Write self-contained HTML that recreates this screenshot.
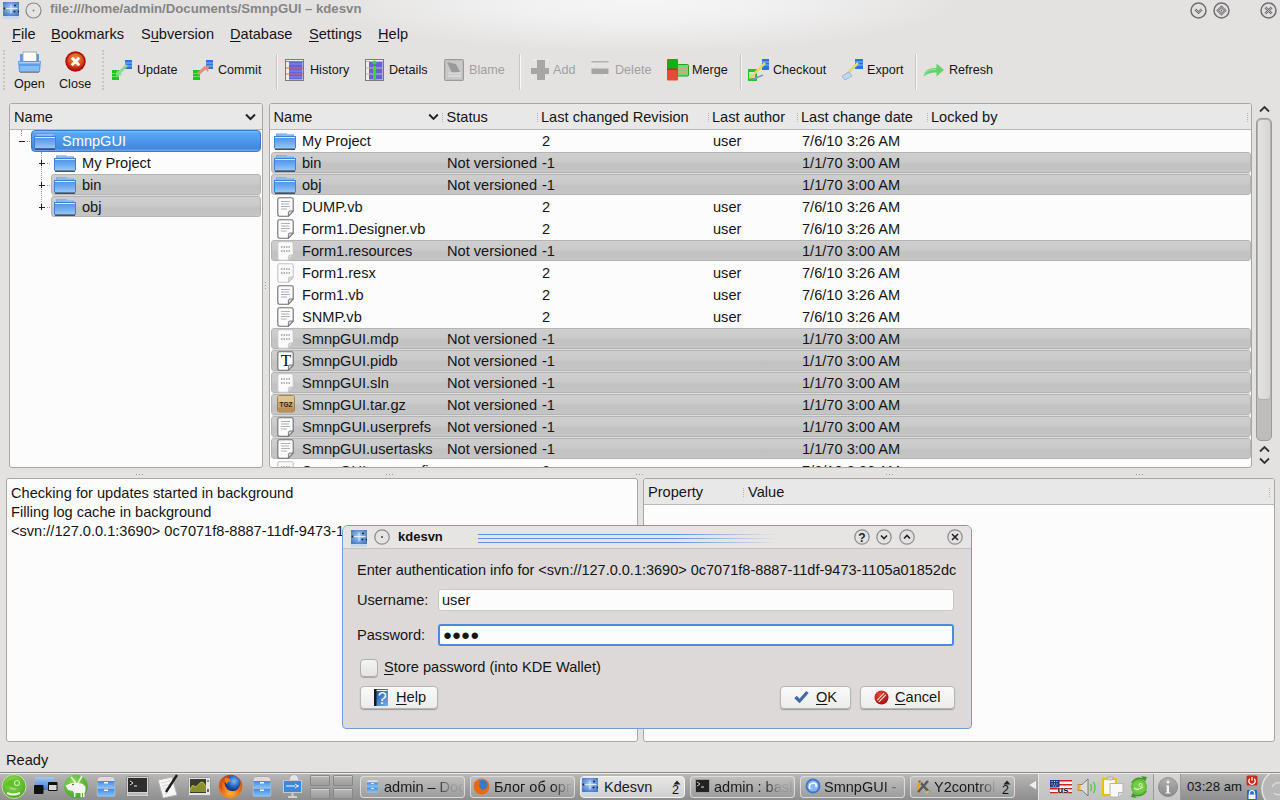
<!DOCTYPE html><html><head><meta charset="utf-8"><style>
*{box-sizing:border-box;margin:0;padding:0}
html,body{width:1280px;height:800px;overflow:hidden}
body{-webkit-font-smoothing:antialiased;background:#e4e2e1;font-family:"Liberation Sans",sans-serif;font-size:14.6px;color:#151515;position:relative}
.a{position:absolute;white-space:pre}
.u{text-decoration:underline;text-underline-offset:2px;text-decoration-thickness:1px}
.panel{position:absolute;background:#fcfcfc;border:1px solid #a9a7a6;border-radius:3px;overflow:hidden}
.hdr{position:absolute;left:0;right:0;top:0;height:26px;background:#e9e8e8;border-bottom:1px solid #b9b8b8}
.grey{position:absolute;background:linear-gradient(#cecece,#cbcbcb 40%,#c2c2c2 60%,#c5c5c5);border:1px solid #b4b4b4;border-radius:3px}
.sel{position:absolute;background:linear-gradient(#8cc0f4 0,#56a6f8 2px,#52a0f4 30%,#4a92e6 60%,#4288dc calc(100% - 2px),#6aa2e4 calc(100% - 1px),#6aa2e4 100%);border:1px solid #3a7ad2;border-radius:4px}
.tb{position:absolute;font-size:12.6px;white-space:pre;line-height:16px}
.dis{color:#a0a0a0}
.sep{position:absolute;width:2px;border-left:1px solid #c8c6c5;border-right:1px solid #f6f6f6}
.t{position:absolute;white-space:pre;line-height:18px}
</style></head><body>
<svg width="0" height="0" style="position:absolute"><defs><linearGradient id="fg" x1="0" y1="0" x2="0" y2="1"><stop offset="0" stop-color="#4e92e6"/><stop offset="0.5" stop-color="#6eaaee"/><stop offset="1" stop-color="#92c8fa"/></linearGradient></defs></svg>
<div class="a" style="left:0;top:0;width:1280px;height:100px;background:radial-gradient(320px 52px at 640px 0px,#f6f6f6 0%,#f0f0f0 45%,rgba(228,226,225,0) 100%)"></div>
<svg class="a" style="left:3px;top:2px" width="16" height="17"><defs><radialGradient id="kg" cx="0.5" cy="0.45" r="0.6"><stop offset="0" stop-color="#b0d0f4"/><stop offset="0.5" stop-color="#7aa8e0"/><stop offset="1" stop-color="#4a7cc8"/></radialGradient></defs><rect x="0" y="0" width="16" height="14" fill="url(#kg)"/><rect x="0" y="14" width="16" height="3" fill="#c8d8ea"/><path d="M1.5 6.5h13M8 2.5v9" stroke="#e8f0fa" stroke-width="0.9"/><circle cx="1.5" cy="6.5" r="1" fill="#223"/><circle cx="12" cy="3.5" r="1" fill="#223"/><circle cx="11.5" cy="9.5" r="1.1" fill="#223"/><circle cx="15.5" cy="9.5" r="0.9" fill="#223"/></svg>
<svg class="a" style="left:25px;top:2px" width="17" height="17"><circle cx="8.5" cy="8.5" r="7.5" fill="#e4e4e4" stroke="#8a8a8a" stroke-width="1.2"/><circle cx="8.5" cy="8.5" r="1" fill="#888"/></svg>
<div class="a" style="left:50px;top:0px;font-weight:bold;color:#858585;font-size:13.2px;line-height:18px">file:///home/admin/Documents/SmnpGUI – kdesvn</div>
<svg class="a" style="left:1190px;top:2px" width="17" height="17"><circle cx="8.5" cy="8.5" r="7.5" fill="#e2e0e0" stroke="#6e6e6e" stroke-width="1.5"/><path d="M5.3 7.3l3.2 3.2 3.2-3.2" stroke="#707070" stroke-width="2.4" fill="none"/><path d="M5.3 7.3l3.2 3.2 3.2-3.2" stroke="#d8d8d8" stroke-width="0.7" fill="none"/></svg>
<svg class="a" style="left:1213px;top:2px" width="17" height="17"><circle cx="8.5" cy="8.5" r="7.5" fill="#e2e0e0" stroke="#6e6e6e" stroke-width="1.5"/><path d="M8.5 4.8l3.7 3.7-3.7 3.7-3.7-3.7z" stroke="#707070" stroke-width="2.2" fill="none"/><path d="M8.5 4.8l3.7 3.7-3.7 3.7-3.7-3.7z" stroke="#d8d8d8" stroke-width="0.7" fill="none"/><circle cx="8.5" cy="8.5" r="0.9" fill="#707070"/></svg>
<svg class="a" style="left:1260px;top:2px" width="17" height="17"><circle cx="8.5" cy="8.5" r="7.5" fill="#e2e0e0" stroke="#6e6e6e" stroke-width="1.5"/><path d="M5.3 5.3l6.4 6.4M11.7 5.3l-6.4 6.4" stroke="#707070" stroke-width="2.4"/><path d="M5.3 5.3l6.4 6.4M11.7 5.3l-6.4 6.4" stroke="#d8d8d8" stroke-width="0.7"/></svg>
<div class="t" style="left:12px;top:25px"><span class="u">F</span>ile</div>
<div class="t" style="left:51px;top:25px"><span class="u">B</span>ookmarks</div>
<div class="t" style="left:141px;top:25px">S<span class="u">u</span>bversion</div>
<div class="t" style="left:230px;top:25px"><span class="u">D</span>atabase</div>
<div class="t" style="left:309px;top:25px"><span class="u">S</span>ettings</div>
<div class="t" style="left:378px;top:25px"><span class="u">H</span>elp</div>
<div class="a" style="left:3px;top:50px;width:2px;height:40px;border-left:2px dotted #c8c6c5"></div>
<div class="a" style="left:102px;top:50px;width:2px;height:40px;border-left:2px dotted #c8c6c5"></div>
<svg class="a" style="left:18px;top:51px" width="23" height="22"><rect x="2" y="3" width="19" height="8" fill="#5b9ae4"/><rect x="5" y="1" width="13.5" height="9.5" fill="#fbfbfb" stroke="#a9a9a9"/><path d="M0 10h23l-1 11h-21z" fill="#5e9ee8"/><rect x="1" y="11" width="21" height="1.5" fill="#a8cdf6"/><rect x="2" y="15" width="19" height="5" fill="#84bcf4"/><rect x="2" y="21" width="19" height="1" fill="#888"/></svg>
<div class="tb" style="left:14px;top:76px">Open</div>
<svg class="a" style="left:65px;top:51px" width="22" height="22"><defs><radialGradient id="cg" cx="0.5" cy="0.35" r="0.6"><stop offset="0" stop-color="#f09040"/><stop offset="0.7" stop-color="#d8501a"/><stop offset="1" stop-color="#b81810"/></radialGradient></defs><circle cx="10.5" cy="10.5" r="10.2" fill="#b0100c"/><circle cx="10.5" cy="10.5" r="8.6" fill="url(#cg)"/><path d="M6.8 6.8l7.4 7.4M14.2 6.8l-7.4 7.4" stroke="#fff" stroke-width="2.8"/></svg>
<div class="tb" style="left:59px;top:76px">Close</div>
<svg class="a" style="left:112px;top:59px" width="22" height="22"><rect x="0" y="11" width="7" height="10" fill="#22c322"/><path d="M0 14.5h7M0 17.5h7" stroke="#66e066" stroke-width="1"/><rect x="13" y="1" width="7" height="9" fill="#2a72e8"/><path d="M13 4h7M13 7h7" stroke="#8ab8f8" stroke-width="1"/><path d="M15 6l-8 8" stroke="#90d890" stroke-width="3"/><path d="M4 17l1-6 5 5z" fill="#90d890"/></svg>
<div class="tb" style="left:137px;top:62px">Update</div>
<svg class="a" style="left:193px;top:59px" width="22" height="22"><rect x="0" y="11" width="7" height="10" fill="#22c322"/><path d="M0 14.5h7M0 17.5h7" stroke="#66e066" stroke-width="1"/><rect x="13" y="1" width="7" height="9" fill="#2a72e8"/><path d="M13 4h7M13 7h7" stroke="#8ab8f8" stroke-width="1"/><path d="M5 15l8-7" stroke="#e09080" stroke-width="3"/><path d="M16 7l-6 1 5 5z" fill="#e09080"/></svg>
<div class="tb" style="left:218px;top:62px">Commit</div>
<div class="sep" style="left:276px;top:54px;height:36px"></div>
<svg class="a" style="left:284px;top:59px" width="22" height="22"><rect x="1.5" y="0.5" width="18" height="21" fill="#f0ece8" stroke="#7a7a7a"/><rect x="5" y="2" width="13.5" height="18.5" fill="#6464d8"/><path d="M2 2.5h17M2 9h17M2 15h17" stroke="#f06040" stroke-width="1.2"/><path d="M5 5h13M5 12h13M5 18h13" stroke="#8a8ae8" stroke-width="1"/></svg>
<div class="tb" style="left:310px;top:62px">History</div>
<svg class="a" style="left:364px;top:59px" width="22" height="22"><rect x="1.5" y="0.5" width="18" height="21" fill="#f0ece8" stroke="#7a7a7a"/><rect x="5" y="2" width="13.5" height="18.5" fill="#6464d8"/><path d="M2 2.5h17M2 9h17M2 15h17" stroke="#c8b8a0" stroke-width="1"/><rect x="9" y="7" width="3" height="14" fill="#30e030"/><circle cx="10.5" cy="3.5" r="2" fill="#30e030"/></svg>
<div class="tb" style="left:389px;top:62px">Details</div>
<svg class="a" style="left:444px;top:59px" width="22" height="22"><rect x="0.5" y="0.5" width="19" height="21" rx="1" fill="#bdbdbd" stroke="#9a9a9a"/><rect x="2" y="2" width="16" height="18" fill="#c8c8c8"/><path d="M3 3l9 2 4 8-8 1z" fill="#9a9a9a"/><path d="M4 14h13M4 17h13" stroke="#e8e8e8" stroke-width="1"/></svg>
<div class="tb dis" style="left:469px;top:62px">Blame</div>
<div class="sep" style="left:519px;top:54px;height:36px"></div>
<svg class="a" style="left:528px;top:59px" width="22" height="22"><path d="M9 1h8v8h4v6h-4v6h-8v-6h-6v-6h6z" fill="#a6a6a6"/><path d="M5 1h3M18 1h3M3 17l3 3M18 20l3-3" stroke="#f4f4f4" stroke-width="1"/></svg>
<div class="tb dis" style="left:553px;top:62px">Add</div>
<svg class="a" style="left:590px;top:59px" width="22" height="22"><rect x="1.5" y="2" width="17" height="1.5" fill="#b0b0b0"/><rect x="1.5" y="9.5" width="17" height="5.5" fill="#a4a4a4"/><path d="M2 7l3-3M14 18l3-3" stroke="#f4f4f4" stroke-width="1"/></svg>
<div class="tb dis" style="left:615px;top:62px">Delete</div>
<svg class="a" style="left:667px;top:59px" width="22" height="22"><rect x="0" y="0" width="11" height="10" rx="1" fill="#10b010"/><rect x="0" y="10" width="11" height="11.5" rx="1" fill="#e84a3a"/><rect x="0" y="9.5" width="11" height="1.5" fill="#b83018"/><rect x="10.5" y="5.5" width="11" height="11.5" rx="1" fill="#70d870" stroke="#2a9a2a"/><path d="M11 9h10M11 13h10" stroke="#f09a88" stroke-width="1.5"/></svg>
<div class="tb" style="left:692px;top:62px">Merge</div>
<div class="sep" style="left:740px;top:54px;height:36px"></div>
<svg class="a" style="left:747px;top:59px" width="22" height="22"><rect x="1" y="10" width="9" height="12" fill="#22c322"/><rect x="2" y="13" width="6" height="6" fill="#d8e4f8"/><rect x="15" y="0" width="8" height="11" fill="#2a72e8"/><path d="M15 3h8M15 6h8" stroke="#8ab8f8" stroke-width="1"/><path d="M18 4l-13 13" stroke="#e0d870" stroke-width="2.5"/><path d="M2 20l2-6 4 4z" fill="#e0d870"/><path d="M4 21l12-5" stroke="#8890c8" stroke-width="1.5"/></svg>
<div class="tb" style="left:773px;top:62px">Checkout</div>
<svg class="a" style="left:842px;top:59px" width="22" height="22"><rect x="13" y="0" width="8" height="10" fill="#2a72e8"/><path d="M13 3h8M13 6h8" stroke="#8ab8f8" stroke-width="1"/><path d="M16 4l-12 12" stroke="#e0d870" stroke-width="2.5"/><path d="M1 18l4-5 3 3z" fill="#e0d870"/><path d="M0 17l7-4 3 4-7 4z" fill="#c0d8f8" stroke="#90a8d0" stroke-width="0.8"/></svg>
<div class="tb" style="left:867px;top:62px">Export</div>
<div class="sep" style="left:915px;top:54px;height:36px"></div>
<svg class="a" style="left:923px;top:59px" width="22" height="22"><path d="M0.5 17.5q1-9 13-8.5v-4.5l7.5 6.5-7.5 6.5v-4q-7-0.5-13 4z" fill="#64d264"/><path d="M1 16q3-6 12-5.5" stroke="#9ae89a" stroke-width="1" fill="none"/></svg>
<div class="tb" style="left:949px;top:62px">Refresh</div>
<div class="panel" style="left:9px;top:103px;width:254px;height:365px">
<div class="hdr"></div>
<div class="t" style="left:4px;top:4px">Name</div>
<svg class="a" style="left:235px;top:9px" width="11" height="8"><path d="M1 1.5l4.5 4.5 4.5-4.5" stroke="#222" stroke-width="2" fill="none"/></svg>
</div>
<div class="sel" style="left:31px;top:130px;width:230px;height:22px"></div>
<div class="grey" style="left:51px;top:174px;width:210px;height:21px"></div>
<div class="grey" style="left:51px;top:196px;width:210px;height:21px"></div>
<div class="a" style="left:52px;top:195px;width:208px;height:1px;background:#dcdcdc"></div>
<div class="a" style="left:21px;top:130px;height:6px;border-left:1px dotted #999"></div>
<div class="a" style="left:41px;top:152px;height:58px;border-left:1px dotted #999"></div>
<div class="a" style="left:19px;top:141px;width:6px;height:1px;background:#222"></div>
<div class="a" style="left:27px;top:141px;width:3px;border-top:1px dotted #999"></div>
<div class="a" style="left:39px;top:163px;width:6px;height:1px;background:#222"></div>
<div class="a" style="left:41px;top:160px;width:1px;height:6px;background:#222"></div>
<div class="a" style="left:47px;top:163px;width:3px;border-top:1px dotted #999"></div>
<div class="a" style="left:39px;top:185px;width:6px;height:1px;background:#222"></div>
<div class="a" style="left:41px;top:182px;width:1px;height:6px;background:#222"></div>
<div class="a" style="left:47px;top:185px;width:3px;border-top:1px dotted #999"></div>
<div class="a" style="left:39px;top:207px;width:6px;height:1px;background:#222"></div>
<div class="a" style="left:41px;top:204px;width:1px;height:6px;background:#222"></div>
<div class="a" style="left:47px;top:207px;width:3px;border-top:1px dotted #999"></div>
<svg class="a" style="left:34px;top:133px" width="22" height="17" viewBox="0 0 22 17"><path d="M2 3V0.5h10.5l1 1h6.5V3z" fill="#5a96e0"/><rect x="2.5" y="1.2" width="17" height="1.5" fill="#9cc4f0"/><rect x="0" y="3" width="22" height="12.5" fill="#3f80d8"/><rect x="1" y="4" width="20" height="11" fill="url(#fg)"/><rect x="1" y="4" width="20" height="1" fill="#d8e8fa"/><rect x="1" y="15.5" width="20" height="1.5" fill="#44505e"/></svg>
<div class="t" style="left:62px;top:132px;color:#fff">SmnpGUI</div>
<svg class="a" style="left:54px;top:155px" width="22" height="17" viewBox="0 0 22 17"><path d="M2 3V0.5h10.5l1 1h6.5V3z" fill="#5a96e0"/><rect x="2.5" y="1.2" width="17" height="1.5" fill="#9cc4f0"/><rect x="0" y="3" width="22" height="12.5" fill="#3f80d8"/><rect x="1" y="4" width="20" height="11" fill="url(#fg)"/><rect x="1" y="4" width="20" height="1" fill="#d8e8fa"/><rect x="1" y="15.5" width="20" height="1.5" fill="#44505e"/></svg>
<div class="t" style="left:82px;top:154px">My Project</div>
<svg class="a" style="left:54px;top:177px" width="22" height="17" viewBox="0 0 22 17"><path d="M2 3V0.5h10.5l1 1h6.5V3z" fill="#5a96e0"/><rect x="2.5" y="1.2" width="17" height="1.5" fill="#9cc4f0"/><rect x="0" y="3" width="22" height="12.5" fill="#3f80d8"/><rect x="1" y="4" width="20" height="11" fill="url(#fg)"/><rect x="1" y="4" width="20" height="1" fill="#d8e8fa"/><rect x="1" y="15.5" width="20" height="1.5" fill="#44505e"/></svg>
<div class="t" style="left:82px;top:176px">bin</div>
<svg class="a" style="left:54px;top:199px" width="22" height="17" viewBox="0 0 22 17"><path d="M2 3V0.5h10.5l1 1h6.5V3z" fill="#5a96e0"/><rect x="2.5" y="1.2" width="17" height="1.5" fill="#9cc4f0"/><rect x="0" y="3" width="22" height="12.5" fill="#3f80d8"/><rect x="1" y="4" width="20" height="11" fill="url(#fg)"/><rect x="1" y="4" width="20" height="1" fill="#d8e8fa"/><rect x="1" y="15.5" width="20" height="1.5" fill="#44505e"/></svg>
<div class="t" style="left:82px;top:198px">obj</div>
<div class="panel" style="left:269px;top:103px;width:983px;height:365px">
<div class="hdr"></div>
<div class="t" style="left:3.5px;top:4px">Name</div>
<div class="t" style="left:176.5px;top:4px">Status</div>
<div class="t" style="left:271px;top:4px">Last changed Revision</div>
<div class="t" style="left:442px;top:4px">Last author</div>
<div class="t" style="left:531px;top:4px">Last change date</div>
<div class="t" style="left:661px;top:4px">Locked by</div>
<svg class="a" style="left:158px;top:9px" width="11" height="8"><path d="M1.2 1.5l4.3 4.3 4.3-4.3" stroke="#222" stroke-width="1.9" fill="none"/></svg>
<div class="a" style="left:172px;top:9px;height:9px;border-left:1px dotted #b4b4b4"></div>
<div class="a" style="left:267px;top:9px;height:9px;border-left:1px dotted #b4b4b4"></div>
<div class="a" style="left:438px;top:9px;height:9px;border-left:1px dotted #b4b4b4"></div>
<div class="a" style="left:527px;top:9px;height:9px;border-left:1px dotted #b4b4b4"></div>
<div class="a" style="left:657px;top:9px;height:9px;border-left:1px dotted #b4b4b4"></div>
<div class="a" style="left:977px;top:9px;height:9px;border-left:1px dotted #b4b4b4"></div>
<svg class="a" style="left:4px;top:29px" width="22" height="17" viewBox="0 0 22 17"><path d="M2 3V0.5h10.5l1 1h6.5V3z" fill="#5a96e0"/><rect x="2.5" y="1.2" width="17" height="1.5" fill="#9cc4f0"/><rect x="0" y="3" width="22" height="12.5" fill="#3f80d8"/><rect x="1" y="4" width="20" height="11" fill="url(#fg)"/><rect x="1" y="4" width="20" height="1" fill="#d8e8fa"/><rect x="1" y="15.5" width="20" height="1.5" fill="#44505e"/></svg>
<div class="t" style="left:32px;top:28px">My Project</div>
<div class="t" style="left:272px;top:28px">2</div>
<div class="t" style="left:443px;top:28px">user</div>
<div class="t" style="left:532px;top:28px">7/6/10 3:26 AM</div>
<div class="grey" style="left:1px;top:48px;width:980px;height:21px"></div>
<div class="a" style="left:2px;top:69px;width:978px;height:1px;background:#dcdcdc"></div>
<svg class="a" style="left:4px;top:51px" width="22" height="17" viewBox="0 0 22 17"><path d="M2 3V0.5h10.5l1 1h6.5V3z" fill="#5a96e0"/><rect x="2.5" y="1.2" width="17" height="1.5" fill="#9cc4f0"/><rect x="0" y="3" width="22" height="12.5" fill="#3f80d8"/><rect x="1" y="4" width="20" height="11" fill="url(#fg)"/><rect x="1" y="4" width="20" height="1" fill="#d8e8fa"/><rect x="1" y="15.5" width="20" height="1.5" fill="#44505e"/></svg>
<div class="t" style="left:32px;top:50px">bin</div>
<div class="t" style="left:177px;top:50px">Not versioned</div>
<div class="t" style="left:272px;top:50px">-1</div>
<div class="t" style="left:532px;top:50px">1/1/70 3:00 AM</div>
<div class="grey" style="left:1px;top:70px;width:980px;height:21px"></div>
<svg class="a" style="left:4px;top:73px" width="22" height="17" viewBox="0 0 22 17"><path d="M2 3V0.5h10.5l1 1h6.5V3z" fill="#5a96e0"/><rect x="2.5" y="1.2" width="17" height="1.5" fill="#9cc4f0"/><rect x="0" y="3" width="22" height="12.5" fill="#3f80d8"/><rect x="1" y="4" width="20" height="11" fill="url(#fg)"/><rect x="1" y="4" width="20" height="1" fill="#d8e8fa"/><rect x="1" y="15.5" width="20" height="1.5" fill="#44505e"/></svg>
<div class="t" style="left:32px;top:72px">obj</div>
<div class="t" style="left:177px;top:72px">Not versioned</div>
<div class="t" style="left:272px;top:72px">-1</div>
<div class="t" style="left:532px;top:72px">1/1/70 3:00 AM</div>
<svg class="a" style="left:7px;top:93px" width="18" height="20" viewBox="0 0 18 20"><path d="M2.5 0.8h12q1.7 0 1.7 1.7v11.5l-4.8 5.2h-8.9q-1.7 0-1.7-1.7v-15q0-1.7 1.7-1.7z" fill="#fbfbfb" stroke="#6e6e6e" stroke-width="1.1"/><path d="M16.2 14l-4.8 5.2v-3.5q0-1.7 1.7-1.7z" fill="#d8d8d8" stroke="#6e6e6e" stroke-width="0.9"/><path d="M4 4.5h9M4 7h8M4 9.5h9M4 12h6" stroke="#a4a8b4" stroke-width="0.9"/></svg>
<div class="t" style="left:32px;top:94px">DUMP.vb</div>
<div class="t" style="left:272px;top:94px">2</div>
<div class="t" style="left:443px;top:94px">user</div>
<div class="t" style="left:532px;top:94px">7/6/10 3:26 AM</div>
<svg class="a" style="left:7px;top:115px" width="18" height="20" viewBox="0 0 18 20"><path d="M2.5 0.8h12q1.7 0 1.7 1.7v11.5l-4.8 5.2h-8.9q-1.7 0-1.7-1.7v-15q0-1.7 1.7-1.7z" fill="#fbfbfb" stroke="#6e6e6e" stroke-width="1.1"/><path d="M16.2 14l-4.8 5.2v-3.5q0-1.7 1.7-1.7z" fill="#d8d8d8" stroke="#6e6e6e" stroke-width="0.9"/><path d="M4 4.5h9M4 7h8M4 9.5h9M4 12h6" stroke="#a4a8b4" stroke-width="0.9"/></svg>
<div class="t" style="left:32px;top:116px">Form1.Designer.vb</div>
<div class="t" style="left:272px;top:116px">2</div>
<div class="t" style="left:443px;top:116px">user</div>
<div class="t" style="left:532px;top:116px">7/6/10 3:26 AM</div>
<div class="grey" style="left:1px;top:136px;width:980px;height:21px"></div>
<svg class="a" style="left:7px;top:137px" width="18" height="20" viewBox="0 0 18 20"><path d="M2.5 0.8h12q1.7 0 1.7 1.7v11.5l-4.8 5.2h-8.9q-1.7 0-1.7-1.7v-15q0-1.7 1.7-1.7z" fill="#fbfbfb" stroke="#c4c4c4" stroke-width="1.1"/><path d="M16.2 14l-4.8 5.2v-3.5q0-1.7 1.7-1.7z" fill="#d8d8d8" stroke="#c4c4c4" stroke-width="0.9"/><path d="M4 6h9M4 10h9" stroke="#b0b4bc" stroke-width="2" stroke-dasharray="1.5 1"/></svg>
<div class="t" style="left:32px;top:138px">Form1.resources</div>
<div class="t" style="left:177px;top:138px">Not versioned</div>
<div class="t" style="left:272px;top:138px">-1</div>
<div class="t" style="left:532px;top:138px">1/1/70 3:00 AM</div>
<svg class="a" style="left:7px;top:159px" width="18" height="20" viewBox="0 0 18 20"><path d="M2.5 0.8h12q1.7 0 1.7 1.7v11.5l-4.8 5.2h-8.9q-1.7 0-1.7-1.7v-15q0-1.7 1.7-1.7z" fill="#fbfbfb" stroke="#c4c4c4" stroke-width="1.1"/><path d="M16.2 14l-4.8 5.2v-3.5q0-1.7 1.7-1.7z" fill="#d8d8d8" stroke="#c4c4c4" stroke-width="0.9"/><path d="M4 6h9M4 10h9" stroke="#b0b4bc" stroke-width="2" stroke-dasharray="1.5 1"/></svg>
<div class="t" style="left:32px;top:160px">Form1.resx</div>
<div class="t" style="left:272px;top:160px">2</div>
<div class="t" style="left:443px;top:160px">user</div>
<div class="t" style="left:532px;top:160px">7/6/10 3:26 AM</div>
<svg class="a" style="left:7px;top:181px" width="18" height="20" viewBox="0 0 18 20"><path d="M2.5 0.8h12q1.7 0 1.7 1.7v11.5l-4.8 5.2h-8.9q-1.7 0-1.7-1.7v-15q0-1.7 1.7-1.7z" fill="#fbfbfb" stroke="#6e6e6e" stroke-width="1.1"/><path d="M16.2 14l-4.8 5.2v-3.5q0-1.7 1.7-1.7z" fill="#d8d8d8" stroke="#6e6e6e" stroke-width="0.9"/><path d="M4 4.5h9M4 7h8M4 9.5h9M4 12h6" stroke="#a4a8b4" stroke-width="0.9"/></svg>
<div class="t" style="left:32px;top:182px">Form1.vb</div>
<div class="t" style="left:272px;top:182px">2</div>
<div class="t" style="left:443px;top:182px">user</div>
<div class="t" style="left:532px;top:182px">7/6/10 3:26 AM</div>
<svg class="a" style="left:7px;top:203px" width="18" height="20" viewBox="0 0 18 20"><path d="M2.5 0.8h12q1.7 0 1.7 1.7v11.5l-4.8 5.2h-8.9q-1.7 0-1.7-1.7v-15q0-1.7 1.7-1.7z" fill="#fbfbfb" stroke="#6e6e6e" stroke-width="1.1"/><path d="M16.2 14l-4.8 5.2v-3.5q0-1.7 1.7-1.7z" fill="#d8d8d8" stroke="#6e6e6e" stroke-width="0.9"/><path d="M4 4.5h9M4 7h8M4 9.5h9M4 12h6" stroke="#a4a8b4" stroke-width="0.9"/></svg>
<div class="t" style="left:32px;top:204px">SNMP.vb</div>
<div class="t" style="left:272px;top:204px">2</div>
<div class="t" style="left:443px;top:204px">user</div>
<div class="t" style="left:532px;top:204px">7/6/10 3:26 AM</div>
<div class="grey" style="left:1px;top:224px;width:980px;height:21px"></div>
<div class="a" style="left:2px;top:245px;width:978px;height:1px;background:#dcdcdc"></div>
<svg class="a" style="left:7px;top:225px" width="18" height="20" viewBox="0 0 18 20"><path d="M2.5 0.8h12q1.7 0 1.7 1.7v11.5l-4.8 5.2h-8.9q-1.7 0-1.7-1.7v-15q0-1.7 1.7-1.7z" fill="#fbfbfb" stroke="#c4c4c4" stroke-width="1.1"/><path d="M16.2 14l-4.8 5.2v-3.5q0-1.7 1.7-1.7z" fill="#d8d8d8" stroke="#c4c4c4" stroke-width="0.9"/><path d="M4 6h9M4 10h9" stroke="#b0b4bc" stroke-width="2" stroke-dasharray="1.5 1"/></svg>
<div class="t" style="left:32px;top:226px">SmnpGUI.mdp</div>
<div class="t" style="left:177px;top:226px">Not versioned</div>
<div class="t" style="left:272px;top:226px">-1</div>
<div class="t" style="left:532px;top:226px">1/1/70 3:00 AM</div>
<div class="grey" style="left:1px;top:246px;width:980px;height:21px"></div>
<div class="a" style="left:2px;top:267px;width:978px;height:1px;background:#dcdcdc"></div>
<svg class="a" style="left:7px;top:247px" width="18" height="20" viewBox="0 0 18 20"><path d="M2.5 0.8h12q1.7 0 1.7 1.7v11.5l-4.8 5.2h-8.9q-1.7 0-1.7-1.7v-15q0-1.7 1.7-1.7z" fill="#fbfbfb" stroke="#6e6e6e" stroke-width="1.1"/><path d="M16.2 14l-4.8 5.2v-3.5q0-1.7 1.7-1.7z" fill="#d8d8d8" stroke="#6e6e6e" stroke-width="0.9"/><text x="9" y="15" font-family="Liberation Serif" font-size="17" text-anchor="middle" fill="#111">T</text></svg>
<div class="t" style="left:32px;top:248px">SmnpGUI.pidb</div>
<div class="t" style="left:177px;top:248px">Not versioned</div>
<div class="t" style="left:272px;top:248px">-1</div>
<div class="t" style="left:532px;top:248px">1/1/70 3:00 AM</div>
<div class="grey" style="left:1px;top:268px;width:980px;height:21px"></div>
<div class="a" style="left:2px;top:289px;width:978px;height:1px;background:#dcdcdc"></div>
<svg class="a" style="left:7px;top:269px" width="18" height="20" viewBox="0 0 18 20"><path d="M2.5 0.8h12q1.7 0 1.7 1.7v11.5l-4.8 5.2h-8.9q-1.7 0-1.7-1.7v-15q0-1.7 1.7-1.7z" fill="#fbfbfb" stroke="#c4c4c4" stroke-width="1.1"/><path d="M16.2 14l-4.8 5.2v-3.5q0-1.7 1.7-1.7z" fill="#d8d8d8" stroke="#c4c4c4" stroke-width="0.9"/><path d="M4 6h9M4 10h9" stroke="#b0b4bc" stroke-width="2" stroke-dasharray="1.5 1"/></svg>
<div class="t" style="left:32px;top:270px">SmnpGUI.sln</div>
<div class="t" style="left:177px;top:270px">Not versioned</div>
<div class="t" style="left:272px;top:270px">-1</div>
<div class="t" style="left:532px;top:270px">1/1/70 3:00 AM</div>
<div class="grey" style="left:1px;top:290px;width:980px;height:21px"></div>
<div class="a" style="left:2px;top:311px;width:978px;height:1px;background:#dcdcdc"></div>
<svg class="a" style="left:7px;top:291px" width="18" height="18"><rect x="0.5" y="0.5" width="17" height="16.5" rx="2" fill="#c8a468" stroke="#a08050"/><rect x="1" y="1" width="16" height="6" fill="#dcc490"/><rect x="1" y="12.5" width="16" height="4" fill="#b89058"/><text x="9" y="12" font-family="Liberation Sans" font-weight="bold" font-size="6.5" text-anchor="middle" fill="#2a2010">TGZ</text></svg>
<div class="t" style="left:32px;top:292px">SmnpGUI.tar.gz</div>
<div class="t" style="left:177px;top:292px">Not versioned</div>
<div class="t" style="left:272px;top:292px">-1</div>
<div class="t" style="left:532px;top:292px">1/1/70 3:00 AM</div>
<div class="grey" style="left:1px;top:312px;width:980px;height:21px"></div>
<div class="a" style="left:2px;top:333px;width:978px;height:1px;background:#dcdcdc"></div>
<svg class="a" style="left:7px;top:313px" width="18" height="20" viewBox="0 0 18 20"><path d="M2.5 0.8h12q1.7 0 1.7 1.7v11.5l-4.8 5.2h-8.9q-1.7 0-1.7-1.7v-15q0-1.7 1.7-1.7z" fill="#fbfbfb" stroke="#6e6e6e" stroke-width="1.1"/><path d="M16.2 14l-4.8 5.2v-3.5q0-1.7 1.7-1.7z" fill="#d8d8d8" stroke="#6e6e6e" stroke-width="0.9"/><path d="M4 4.5h9M4 7h8M4 9.5h9M4 12h6" stroke="#a4a8b4" stroke-width="0.9"/></svg>
<div class="t" style="left:32px;top:314px">SmnpGUI.userprefs</div>
<div class="t" style="left:177px;top:314px">Not versioned</div>
<div class="t" style="left:272px;top:314px">-1</div>
<div class="t" style="left:532px;top:314px">1/1/70 3:00 AM</div>
<div class="grey" style="left:1px;top:334px;width:980px;height:21px"></div>
<svg class="a" style="left:7px;top:335px" width="18" height="20" viewBox="0 0 18 20"><path d="M2.5 0.8h12q1.7 0 1.7 1.7v11.5l-4.8 5.2h-8.9q-1.7 0-1.7-1.7v-15q0-1.7 1.7-1.7z" fill="#fbfbfb" stroke="#6e6e6e" stroke-width="1.1"/><path d="M16.2 14l-4.8 5.2v-3.5q0-1.7 1.7-1.7z" fill="#d8d8d8" stroke="#6e6e6e" stroke-width="0.9"/><path d="M4 4.5h9M4 7h8M4 9.5h9M4 12h6" stroke="#a4a8b4" stroke-width="0.9"/></svg>
<div class="t" style="left:32px;top:336px">SmnpGUI.usertasks</div>
<div class="t" style="left:177px;top:336px">Not versioned</div>
<div class="t" style="left:272px;top:336px">-1</div>
<div class="t" style="left:532px;top:336px">1/1/70 3:00 AM</div>
<svg class="a" style="left:7px;top:357px" width="18" height="20" viewBox="0 0 18 20"><path d="M2.5 0.8h12q1.7 0 1.7 1.7v11.5l-4.8 5.2h-8.9q-1.7 0-1.7-1.7v-15q0-1.7 1.7-1.7z" fill="#fbfbfb" stroke="#c4c4c4" stroke-width="1.1"/><path d="M16.2 14l-4.8 5.2v-3.5q0-1.7 1.7-1.7z" fill="#d8d8d8" stroke="#c4c4c4" stroke-width="0.9"/><path d="M4 6h9M4 10h9" stroke="#b0b4bc" stroke-width="2" stroke-dasharray="1.5 1"/></svg>
<div class="t" style="left:32px;top:358px">SmnpGUI.exe.config</div>
<div class="t" style="left:272px;top:358px">2</div>
<div class="t" style="left:532px;top:358px">7/6/10 3:26 AM</div>
</div>
<svg class="a" style="left:1259px;top:105px" width="11" height="8"><path d="M1 6.5l4.5-4.5 4.5 4.5" stroke="#333" stroke-width="1.8" fill="none"/></svg>
<div class="a" style="left:1256px;top:118px;width:16px;height:323px;border:1px solid #9a9a9a;border-radius:5px;background:#bdbdbd"></div>
<div class="a" style="left:1257px;top:119px;width:14px;height:281px;border:1px solid #b0b0b0;border-radius:4px;background:linear-gradient(90deg,#e2e2e2,#d6d6d6)"></div>
<svg class="a" style="left:1259px;top:445px" width="11" height="8"><path d="M1 6.5l4.5-4.5 4.5 4.5" stroke="#333" stroke-width="1.8" fill="none"/></svg>
<svg class="a" style="left:1259px;top:457px" width="11" height="8"><path d="M1 1.5l4.5 4.5 4.5-4.5" stroke="#333" stroke-width="1.8" fill="none"/></svg>
<div class="a" style="left:136px;top:474px;width:9px;height:1px;background:repeating-linear-gradient(90deg,#9a9a9a 0 1px,transparent 1px 3px)"></div>
<div class="a" style="left:386px;top:474px;width:9px;height:1px;background:repeating-linear-gradient(90deg,#9a9a9a 0 1px,transparent 1px 3px)"></div>
<div class="a" style="left:636px;top:474px;width:9px;height:1px;background:repeating-linear-gradient(90deg,#9a9a9a 0 1px,transparent 1px 3px)"></div>
<div class="a" style="left:886px;top:474px;width:9px;height:1px;background:repeating-linear-gradient(90deg,#9a9a9a 0 1px,transparent 1px 3px)"></div>
<div class="a" style="left:1136px;top:474px;width:9px;height:1px;background:repeating-linear-gradient(90deg,#9a9a9a 0 1px,transparent 1px 3px)"></div>
<div class="a" style="left:265px;top:282px;width:1px;height:9px;background:repeating-linear-gradient(#9a9a9a 0 1px,transparent 1px 3px)"></div>
<div class="a" style="left:640px;top:625px;width:1px;height:9px;background:repeating-linear-gradient(#9a9a9a 0 1px,transparent 1px 3px)"></div>
<div class="panel" style="left:6px;top:478px;width:632px;height:264px">
<div class="t" style="left:4px;top:5px">Checking for updates started in background</div>
<div class="t" style="left:4px;top:24px">Filling log cache in background</div>
<div class="t" style="left:4px;top:43px">&lt;svn://127.0.0.1:3690&gt; 0c7071f8-8887-11df-9473-1105a01852dc</div>
</div>
<div class="panel" style="left:643px;top:478px;width:632px;height:264px">
<div class="hdr"></div>
<div class="t" style="left:4px;top:4px">Property</div>
<div class="t" style="left:104px;top:4px">Value</div>
<div class="a" style="left:99px;top:9px;height:9px;border-left:1px dotted #b4b4b4"></div>
<div class="a" style="left:625px;top:9px;height:9px;border-left:1px dotted #b4b4b4"></div>
</div>
<div class="t" style="left:6px;top:751px">Ready</div>
<div class="a" style="left:0;top:772px;width:1280px;height:28px;background:linear-gradient(#b8b8b8,#a2a2a2 50%,#8e8e8e);border-top:1px solid #8a8a8a"></div>
<div class="a" style="left:0;top:773px;width:1280px;height:1px;background:#ececec"></div>
<svg class="a" style="left:1px;top:774px" width="26" height="26"><defs><radialGradient id="sg" cx="0.45" cy="0.35" r="0.65"><stop offset="0" stop-color="#9ae05a"/><stop offset="1" stop-color="#4aa820"/></radialGradient></defs><circle cx="13" cy="12.5" r="12" fill="url(#sg)" stroke="#d8f0c0" stroke-width="0.8"/><path d="M4 12q2-7 10-7q8 1 8 8q-5 2-10 0q-4-1-8-1z" fill="#5ec22c"/><circle cx="16" cy="9" r="2.5" fill="none" stroke="#c8eca8" stroke-width="1.2"/><path d="M6 19q6 3 13 0" stroke="#f0fae8" stroke-width="2" fill="none"/><path d="M9 14q3 2 6 1" stroke="#b8e898" stroke-width="1" fill="none"/></svg>
<svg class="a" style="left:34px;top:777px" width="24" height="17"><defs><linearGradient id="ng" x1="0" y1="0" x2="0" y2="1"><stop offset="0" stop-color="#a8c8f0"/><stop offset="1" stop-color="#3a78c8"/></linearGradient></defs><rect x="1" y="0" width="19" height="13" fill="url(#ng)"/><rect x="0" y="8" width="9.5" height="9" rx="1" fill="#111"/><rect x="14" y="5" width="9.5" height="9" rx="1" fill="#111"/><rect x="15" y="8" width="7.5" height="5" fill="#d8d8d8"/></svg>
<svg class="a" style="left:64px;top:774px" width="24" height="25"><defs><radialGradient id="atg" cx="0.4" cy="0.3" r="0.7"><stop offset="0" stop-color="#8ad850"/><stop offset="1" stop-color="#4aa82a"/></radialGradient></defs><circle cx="12" cy="12.5" r="11.8" fill="url(#atg)"/><path d="M7 3l5 6M18 2l-4 7" stroke="#e8f0e0" stroke-width="1.6"/><path d="M1.5 11.5l6-2.5q3-1 6 0q6 0 8 4v3q0 2-1 3v4h-1.5v-4h-1v4h-1.5v-4h-5v4h-1.5v-4q-1-1-1-2q-3-0.5-5-1z" fill="#f4f4f4"/><circle cx="9" cy="10.5" r="0.8" fill="#333"/></svg>
<svg class="a" style="left:96px;top:776px" width="20" height="21" viewBox="0 0 20 21"><defs><linearGradient id="dg96" x1="0" y1="0" x2="0" y2="1"><stop offset="0" stop-color="#3a8ae8"/><stop offset="1" stop-color="#8ac4f8"/></linearGradient></defs><path d="M1 4q0-3.5 3-3.5h12q3 0 3 3.5v16h-18z" fill="#dcdcdc" stroke="#a8a8a8"/><rect x="1.5" y="5" width="17" height="7" fill="url(#dg96)"/><rect x="1.5" y="12.5" width="17" height="8" fill="url(#dg96)"/><rect x="8" y="6" width="4" height="1.5" fill="#fff"/><rect x="8" y="13.5" width="4" height="1.5" fill="#fff"/></svg>
<svg class="a" style="left:126px;top:776px" width="23" height="21"><rect x="0.5" y="0.5" width="22" height="20" rx="1" fill="#d4d4d4" stroke="#8a8a8a"/><rect x="2" y="2" width="19" height="14" fill="#2e2e2e"/><path d="M4 5l3 2-3 2M8 10h3" stroke="#e8e8e8" stroke-width="1"/><rect x="2" y="17" width="19" height="2" fill="#b8b8b8"/></svg>
<svg class="a" style="left:157px;top:774px" width="22" height="25"><path d="M1 6l14-3 5 18-14 3z" fill="#f6f6f6" stroke="#b4b4b4"/><path d="M4 9l9-2M5 12l9-2M5.5 15l9-2" stroke="#ccc" stroke-width="0.8"/><path d="M20 1l-11 17" stroke="#1e1e1e" stroke-width="2.4"/><path d="M9 18l-1 3 2-2z" fill="#d8b060"/></svg>
<svg class="a" style="left:188px;top:777px" width="23" height="19"><rect x="0.5" y="0.5" width="22" height="18" rx="1" fill="#e4e4e4" stroke="#9a9a9a"/><rect x="2" y="2" width="16" height="14" fill="#3a3a30"/><path d="M2 13q2-6 4-4t4-1 4-3 4 5v5h-16z" fill="#8a9030"/><path d="M2 13q2-6 4-4t4-1 4-3 4 5" stroke="#c8d040" fill="none" stroke-width="0.8"/><rect x="19" y="3" width="2" height="2" fill="#888"/><rect x="19" y="12" width="2" height="3" fill="#666"/></svg>
<svg class="a" style="left:218px;top:774px" width="25" height="25"><defs><radialGradient id="fxg" cx="0.6" cy="0.35" r="0.55"><stop offset="0" stop-color="#7ac0f8"/><stop offset="0.6" stop-color="#2a6ac8"/><stop offset="1" stop-color="#1a3a8a"/></radialGradient><radialGradient id="fxo" cx="0.5" cy="0.75" r="0.75"><stop offset="0" stop-color="#f8b830"/><stop offset="0.55" stop-color="#f07018"/><stop offset="1" stop-color="#c03a10"/></radialGradient></defs><circle cx="12.5" cy="12.5" r="11.8" fill="url(#fxo)"/><circle cx="14.5" cy="9.5" r="7.8" fill="url(#fxg)"/><path d="M3 9q1 6 6 8q6 2 14-2q-2 7-9 8q-8 0-11-6q-1-4 0-8z" fill="url(#fxo)"/><path d="M7 4q4-1 6 3q-3 0-4 3q-3-2-2-6z" fill="#f07a1a"/></svg>
<svg class="a" style="left:252px;top:776px" width="20" height="21" viewBox="0 0 20 21"><defs><linearGradient id="dg252" x1="0" y1="0" x2="0" y2="1"><stop offset="0" stop-color="#3a8ae8"/><stop offset="1" stop-color="#8ac4f8"/></linearGradient></defs><path d="M1 4q0-3.5 3-3.5h12q3 0 3 3.5v16h-18z" fill="#dcdcdc" stroke="#a8a8a8"/><rect x="1.5" y="5" width="17" height="7" fill="url(#dg252)"/><rect x="1.5" y="12.5" width="17" height="8" fill="url(#dg252)"/><rect x="8" y="6" width="4" height="1.5" fill="#fff"/><rect x="8" y="13.5" width="4" height="1.5" fill="#fff"/></svg>
<svg class="a" style="left:283px;top:774px" width="19" height="25"><circle cx="11" cy="5" r="4.5" fill="#e4e4e4" stroke="#b0b0b0"/><rect x="0.5" y="6.5" width="18" height="12" fill="#3a88e0" stroke="#c8c8c8"/><path d="M3 12h13M12 10l3 2-3 2" stroke="#fff" stroke-width="1"/><path d="M5 23h9M9.5 18.5v4" stroke="#d0d0d0" stroke-width="2"/></svg>
<div class="a" style="left:310px;top:775px;width:20px;height:11px;border:1px solid #888;border-radius:1px;background:linear-gradient(#b8b8b8,#9c9c9c);box-shadow:inset 0 1px 0 #d4d4d4"></div>
<div class="a" style="left:333px;top:775px;width:20px;height:11px;border:1px solid #888;border-radius:1px;background:linear-gradient(#b8b8b8,#9c9c9c);box-shadow:inset 0 1px 0 #d4d4d4"></div>
<div class="a" style="left:310px;top:788px;width:20px;height:11px;border:1px solid #888;border-radius:1px;background:linear-gradient(#b8b8b8,#9c9c9c);box-shadow:inset 0 1px 0 #d4d4d4"></div>
<div class="a" style="left:333px;top:788px;width:20px;height:11px;border:1px solid #888;border-radius:1px;background:linear-gradient(#b8b8b8,#9c9c9c);box-shadow:inset 0 1px 0 #d4d4d4"></div>
<div class="a" style="left:360px;top:776px;width:105px;height:22px;border:1px solid rgba(230,230,230,0.8);border-radius:4px;background:linear-gradient(rgba(200,200,200,0.55),rgba(170,170,170,0.45))"></div>
<svg class="a" style="left:366px;top:779px" width="13" height="14" viewBox="0 0 20 21"><defs><linearGradient id="dg366" x1="0" y1="0" x2="0" y2="1"><stop offset="0" stop-color="#3a8ae8"/><stop offset="1" stop-color="#8ac4f8"/></linearGradient></defs><path d="M1 4q0-3.5 3-3.5h12q3 0 3 3.5v16h-18z" fill="#dcdcdc" stroke="#a8a8a8"/><rect x="1.5" y="5" width="17" height="7" fill="url(#dg366)"/><rect x="1.5" y="12.5" width="17" height="8" fill="url(#dg366)"/><rect x="8" y="6" width="4" height="1.5" fill="#fff"/><rect x="8" y="13.5" width="4" height="1.5" fill="#fff"/></svg>
<div class="a" style="left:384px;top:778px;font-size:14.5px;line-height:18px;color:#1a1a1a;width:78px;overflow:hidden;-webkit-mask-image:linear-gradient(90deg,#000 52px,rgba(0,0,0,0.12) 68px)">admin – Doc</div>
<div class="a" style="left:470px;top:776px;width:105px;height:22px;border:1px solid rgba(230,230,230,0.8);border-radius:4px;background:linear-gradient(rgba(200,200,200,0.55),rgba(170,170,170,0.45))"></div>
<svg class="a" style="left:473px;top:778px" width="17" height="17"><circle cx="8.5" cy="8.5" r="8" fill="#e8701a"/><circle cx="9.5" cy="7" r="5" fill="#3a78c8"/><path d="M1 4q-1 9 6 12q6 1 9-5q-4 3-8 0q-3-3-1-7z" fill="#e86a10"/></svg>
<div class="a" style="left:494px;top:778px;font-size:14.5px;line-height:18px;color:#1a1a1a;width:78px;overflow:hidden;-webkit-mask-image:linear-gradient(90deg,#000 58px,rgba(0,0,0,0.12) 74px)">Блог об орг</div>
<div class="a" style="left:580px;top:776px;width:105px;height:22px;border:1px solid #f4f4f4;border-radius:4px;background:linear-gradient(#e6e6e6,#d0d0d0)"></div>
<svg class="a" style="left:582px;top:778px" width="16" height="17"><defs><radialGradient id="kg3" cx="0.5" cy="0.45" r="0.6"><stop offset="0" stop-color="#b0d0f4"/><stop offset="0.5" stop-color="#7aa8e0"/><stop offset="1" stop-color="#4a7cc8"/></radialGradient></defs><rect x="0" y="0" width="16" height="14" fill="url(#kg3)"/><rect x="0" y="14" width="16" height="3" fill="#c8d8ea"/><path d="M1.5 6.5h13M8 2.5v9" stroke="#e8f0fa" stroke-width="0.9"/><circle cx="1.5" cy="6.5" r="1" fill="#223"/><circle cx="12" cy="3.5" r="1" fill="#223"/><circle cx="11.5" cy="9.5" r="1.1" fill="#223"/><circle cx="15.5" cy="9.5" r="0.9" fill="#223"/></svg>
<div class="a" style="left:604px;top:778px;font-size:14.5px;line-height:18px;color:#1a1a1a;width:64px;overflow:hidden">Kdesvn</div>
<svg class="a" style="left:673px;top:780px" width="8" height="5"><path d="M0.5 4.5l3.5-4 3.5 4z" fill="#222"/></svg>
<div class="a" style="left:672px;top:784px;font-size:12.5px;line-height:13px;color:#111">2</div>
<div class="a" style="left:690px;top:776px;width:105px;height:22px;border:1px solid rgba(230,230,230,0.8);border-radius:4px;background:linear-gradient(rgba(200,200,200,0.55),rgba(170,170,170,0.45))"></div>
<svg class="a" style="left:695px;top:779px" width="15" height="14"><rect x="0.5" y="0.5" width="14" height="13" fill="#222" stroke="#999"/><path d="M2 3l3 2-3 2M6 8h3" stroke="#ddd"/></svg>
<div class="a" style="left:714px;top:778px;font-size:14.5px;line-height:18px;color:#1a1a1a;width:78px;overflow:hidden;-webkit-mask-image:linear-gradient(90deg,#000 50px,rgba(0,0,0,0.12) 66px)">admin : bash</div>
<div class="a" style="left:800px;top:776px;width:105px;height:22px;border:1px solid rgba(230,230,230,0.8);border-radius:4px;background:linear-gradient(rgba(200,200,200,0.55),rgba(170,170,170,0.45))"></div>
<svg class="a" style="left:805px;top:778px" width="16" height="16"><circle cx="8" cy="8" r="7.5" fill="#3a7ad0"/><circle cx="8" cy="8" r="5.5" fill="#8ab8ec"/><path d="M5 11q-2-5 3-6q4 0 3 4" stroke="#fff" stroke-width="1.6" fill="none"/></svg>
<div class="a" style="left:824px;top:778px;font-size:14.5px;line-height:18px;color:#1a1a1a;width:78px;overflow:hidden;-webkit-mask-image:linear-gradient(90deg,#000 60px,rgba(0,0,0,0.12) 76px)">SmnpGUI - M</div>
<div class="a" style="left:910px;top:776px;width:105px;height:22px;border:1px solid rgba(230,230,230,0.8);border-radius:4px;background:linear-gradient(rgba(200,200,200,0.55),rgba(170,170,170,0.45))"></div>
<svg class="a" style="left:916px;top:779px" width="15" height="15"><path d="M3 2l10 11M12 2l-10 11" stroke="#5a5a5a" stroke-width="2.5"/><path d="M2 11q-1-5 3-8" stroke="#e8a020" stroke-width="2" fill="none"/><path d="M10 14l3-2" stroke="#e8c040" stroke-width="2"/></svg>
<div class="a" style="left:934px;top:778px;font-size:14.5px;line-height:18px;color:#1a1a1a;width:64px;overflow:hidden;-webkit-mask-image:linear-gradient(90deg,#000 44px,rgba(0,0,0,0.12) 60px)">Y2control</div>
<svg class="a" style="left:1003px;top:780px" width="8" height="5"><path d="M0.5 4.5l3.5-4 3.5 4z" fill="#222"/></svg>
<div class="a" style="left:1002px;top:784px;font-size:12.5px;line-height:13px;color:#111">2</div>
<svg class="a" style="left:1027px;top:779px" width="10" height="12"><path d="M9.5 1v10l-8-5z" fill="#f0f0f0" stroke="#a0a0a0" stroke-width="0.8"/></svg>
<div class="a" style="left:1038px;top:774px;width:115px;height:26px;background:linear-gradient(#cdcdcd,#c2c2c2);border-left:1px solid #e6e6e6"></div>
<svg class="a" style="left:1050px;top:780px" width="22" height="14"><rect width="22" height="14" fill="#f4f4f4"/><path d="M0 0.8h22M0 4.8h22M0 8.8h22M0 12.8h22" stroke="#d02020" stroke-width="1.6"/><rect width="9.5" height="7.5" fill="#1e3a8a"/><path d="M1.5 1.5h1M4 1.5h1M6.5 1.5h1M1.5 4h1M4 4h1M6.5 4h1M2.8 6h1M5.3 6h1" stroke="#fff" stroke-width="0.9"/><text x="13" y="12.5" font-size="9.5" font-weight="bold" font-family="Liberation Sans" text-anchor="middle" fill="#111" stroke="#fff" stroke-width="0.6" paint-order="stroke">us</text></svg>
<svg class="a" style="left:1076px;top:778px" width="21" height="19"><path d="M2 6.5h4l6-5.5v17l-6-5.5h-4z" fill="#dcdcdc" stroke="#707070" stroke-width="0.9"/><rect x="1" y="6.5" width="3.5" height="6" fill="#f0b020"/><path d="M14.5 6q2 3.5 0 7M17.5 4q3 5.5 0 11" stroke="#58c848" stroke-width="1.4" fill="none"/></svg>
<svg class="a" style="left:1102px;top:776px" width="22" height="22"><rect x="1" y="3" width="13" height="16" fill="#fffbe8" stroke="#f0c000" stroke-width="2"/><rect x="5" y="1" width="6" height="3" rx="1" fill="#d8d8d8" stroke="#999" stroke-width="0.6"/><path d="M8 7.5h13v9l-4.5 4.5h-8.5z" fill="#f8f8f8" stroke="#b0b0b0" stroke-width="0.9"/><path d="M21 16.5h-4.5v4.5" fill="#e0e0e0" stroke="#b0b0b0" stroke-width="0.9"/></svg>
<svg class="a" style="left:1128px;top:776px" width="22" height="22"><path d="M3 7q4-7 12-5l-2-2 6 1-2 5-1-2q-6-2-10 3z" fill="#3a9a22"/><path d="M19 15q-4 7-12 5l2 2-6-1 2-5 1 2q6 2 10-3z" fill="#3a9a22"/><circle cx="11" cy="11" r="8" fill="#5cbc30"/><circle cx="11" cy="11" r="6.5" fill="#74cc44"/><path d="M6 12q3 3 9-1" stroke="#e0f4d0" stroke-width="1.2" fill="none"/><circle cx="12.5" cy="9" r="1.6" fill="none" stroke="#e0f4d0" stroke-width="0.9"/></svg>
<div class="a" style="left:1153px;top:774px;width:28px;height:26px;background:linear-gradient(#d6d6d6,#c6c6c6);border-left:1px solid #9a9a9a;border-right:1px solid #9a9a9a"></div>
<svg class="a" style="left:1158px;top:777px" width="20" height="20"><defs><linearGradient id="ig" x1="0" y1="0" x2="0" y2="1"><stop offset="0" stop-color="#b0b0b0"/><stop offset="1" stop-color="#8a8a8a"/></linearGradient></defs><circle cx="10" cy="10" r="9.5" fill="url(#ig)" stroke="#808080" stroke-width="0.8"/><circle cx="10" cy="5" r="1.5" fill="#f4f4f4"/><path d="M8 8.5h3v7h1.5v1h-5v-1h1.2v-6h-0.7z" fill="#f4f4f4"/></svg>
<div class="a" style="left:1187px;top:778px;font-size:13.2px;line-height:18px;color:#151515">03:28 am</div>
<svg class="a" style="left:1246px;top:775px" width="12" height="25"><rect x="0.5" y="0.5" width="11" height="10" rx="1.5" fill="#d02818"/><path d="M3.8 3.8a3.2 3.2 0 1 0 4.4 0M6 2v3.5" stroke="#fff" stroke-width="1.3" fill="none"/><rect x="1" y="15" width="10" height="10" rx="1" fill="#2a68c0"/><path d="M3.5 19.5v-1.5a2.5 2.5 0 0 1 5 0v1.5" stroke="#fff" stroke-width="1.2" fill="none"/><rect x="2.5" y="19.5" width="7" height="4.5" fill="#f4f4f4"/></svg>
<svg class="a" style="left:1260px;top:774px" width="20" height="26"><circle cx="21" cy="15" r="19" fill="#b8b8b8" stroke="#e4e4e4" stroke-width="1.5"/><path d="M12 13q3-5 8-4M14 19q3 3 6 1" stroke="#d8d8d8" stroke-width="1.5" fill="none"/></svg>
<div class="a" style="left:342px;top:525px;width:630px;height:204px;border:1px solid #6f9ddb;border-radius:6px 6px 4px 4px;background:#dcd9d8;overflow:hidden">
<div class="a" style="left:0;top:0;width:628px;height:23px;background:#e7e5e4;border-bottom:1px solid #c4c2c1"></div>
<div class="a" style="left:135px;top:8px;width:300px;height:1px;background:linear-gradient(90deg,#5e92de,#5e92de 65%,rgba(94,146,222,0))"></div>
<div class="a" style="left:135px;top:12px;width:300px;height:1px;background:linear-gradient(90deg,#5e92de,#5e92de 65%,rgba(94,146,222,0))"></div>
<div class="a" style="left:135px;top:16px;width:300px;height:1px;background:linear-gradient(90deg,#5e92de,#5e92de 65%,rgba(94,146,222,0))"></div>
</div>
<svg class="a" style="left:351px;top:530px" width="16" height="17"><defs><radialGradient id="kg2" cx="0.5" cy="0.45" r="0.6"><stop offset="0" stop-color="#b0d0f4"/><stop offset="0.5" stop-color="#7aa8e0"/><stop offset="1" stop-color="#4a7cc8"/></radialGradient></defs><rect x="0" y="0" width="16" height="14" fill="url(#kg2)"/><rect x="0" y="14" width="16" height="3" fill="#c8d8ea"/><path d="M1.5 6.5h13M8 2.5v9" stroke="#e8f0fa" stroke-width="0.9"/><circle cx="1.5" cy="6.5" r="1" fill="#223"/><circle cx="12" cy="3.5" r="1" fill="#223"/><circle cx="11.5" cy="9.5" r="1.1" fill="#223"/><circle cx="15.5" cy="9.5" r="0.9" fill="#223"/></svg>
<svg class="a" style="left:374px;top:529px" width="16" height="16"><circle cx="8" cy="8" r="7.2" fill="#e4e4e4" stroke="#8a8a8a" stroke-width="1.2"/><circle cx="8" cy="8" r="0.9" fill="#333"/></svg>
<div class="a" style="left:398px;top:528px;font-weight:bold;font-size:13px;line-height:18px;color:#111">kdesvn</div>
<svg class="a" style="left:854px;top:529px" width="16" height="16"><circle cx="8" cy="8" r="7.2" fill="#e2e2e2" stroke="#8a8a8a" stroke-width="1.2"/><text x="8" y="12.5" font-family="Liberation Sans" font-weight="bold" font-size="12" text-anchor="middle" fill="#222">?</text></svg>
<svg class="a" style="left:876px;top:529px" width="16" height="16"><circle cx="8" cy="8" r="7.2" fill="#e2e2e2" stroke="#8a8a8a" stroke-width="1.2"/><path d="M5 6.5l3 3 3-3" stroke="#222" stroke-width="1.6" fill="none"/></svg>
<svg class="a" style="left:899px;top:529px" width="16" height="16"><circle cx="8" cy="8" r="7.2" fill="#e2e2e2" stroke="#8a8a8a" stroke-width="1.2"/><path d="M5 9.5l3-3 3 3" stroke="#222" stroke-width="1.6" fill="none"/></svg>
<svg class="a" style="left:947px;top:529px" width="16" height="16"><circle cx="8" cy="8" r="7.2" fill="#e2e2e2" stroke="#8a8a8a" stroke-width="1.2"/><path d="M5 5l6 6M11 5l-6 6" stroke="#222" stroke-width="1.6"/></svg>
<div class="t" style="left:357px;top:561px;font-size:14.5px">Enter authentication info for &lt;svn://127.0.0.1:3690&gt; 0c7071f8-8887-11df-9473-1105a01852dc</div>
<div class="t" style="left:357px;top:591px">Username:</div>
<div class="a" style="left:438px;top:589px;width:516px;height:22px;background:#fcfcfc;border:1px solid #c8c6c5;border-radius:3px"></div>
<div class="t" style="left:442px;top:591px">user</div>
<div class="t" style="left:357px;top:626px">Password:</div>
<div class="a" style="left:438px;top:624px;width:516px;height:22px;background:#fcfcfc;border:2px solid #4a8ae0;border-radius:3px"></div>
<div class="a" style="left:443px;top:626px;font-size:15px;line-height:18px;letter-spacing:0px">●●●●</div>
<div class="a" style="left:360px;top:659px;width:18px;height:18px;border:1px solid #b0aeac;border-radius:4px;background:linear-gradient(#f4f4f4,#e4e4e4);box-shadow:0 1px 0 #aaa"></div>
<div class="t" style="left:384px;top:658px"><span class="u">S</span>tore password (into KDE Wallet)</div>
<div class="a" style="left:360px;top:686px;width:78px;height:23px;border:1px solid #b8b6b5;border-radius:4px;background:linear-gradient(#fafafa,#ececec);box-shadow:0 1px 1px #999"></div>
<svg class="a" style="left:374px;top:689px" width="14" height="17"><defs><linearGradient id="hb" x1="0" y1="0" x2="1" y2="1"><stop offset="0" stop-color="#1c4c9c"/><stop offset="1" stop-color="#70b0f4"/></linearGradient></defs><rect x="0" y="0" width="14" height="17" fill="url(#hb)"/><rect x="0" y="0" width="2.5" height="17" fill="#151a22"/><rect x="2.5" y="1" width="11" height="1" fill="#e8f0f8"/><text x="8.3" y="15" font-family="Liberation Sans" font-size="16" text-anchor="middle" fill="#fff">?</text></svg>
<div class="t" style="left:396px;top:688px"><span class="u">H</span>elp</div>
<div class="a" style="left:780px;top:686px;width:71px;height:23px;border:1px solid #b8b6b5;border-radius:4px;background:linear-gradient(#fafafa,#ececec);box-shadow:0 1px 1px #999"></div>
<svg class="a" style="left:794px;top:690px" width="15" height="13"><path d="M1.5 7l4 4 8-9" stroke="#3d6aa8" stroke-width="3.2" fill="none"/></svg>
<div class="t" style="left:816px;top:688px"><span class="u">O</span>K</div>
<div class="a" style="left:860px;top:686px;width:95px;height:23px;border:1px solid #b8b6b5;border-radius:4px;background:linear-gradient(#fafafa,#ececec);box-shadow:0 1px 1px #999"></div>
<svg class="a" style="left:874px;top:690px" width="15" height="15"><defs><radialGradient id="cnl" cx="0.4" cy="0.3" r="0.7"><stop offset="0" stop-color="#e84838"/><stop offset="1" stop-color="#a80e0e"/></radialGradient></defs><circle cx="7.5" cy="7.5" r="7" fill="url(#cnl)"/><path d="M4 11l7-7" stroke="#f4e4e4" stroke-width="3.6"/><path d="M4 11l7-7" stroke="#c82020" stroke-width="1.2"/></svg>
<div class="t" style="left:895px;top:688px"><span class="u">C</span>ancel</div>
</body></html>
